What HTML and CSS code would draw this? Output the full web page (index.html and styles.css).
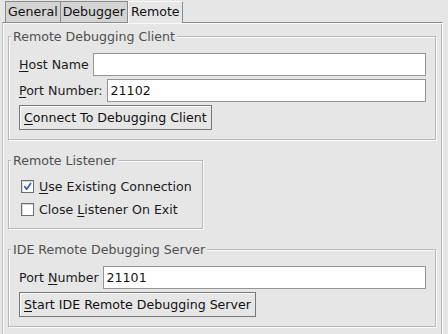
FILE: index.html
```html
<!DOCTYPE html>
<html>
<head>
<meta charset="utf-8">
<link rel="stylesheet" href="styles.css">
</head>
<body>
<div class="tabs">
  <div class="tab">General</div>
  <div class="tab">Debugger</div>
  <div class="tab active">Remote</div>
</div>
<div class="panel">
  <fieldset class="group">
    <legend>Remote Debugging Client</legend>
    <div class="body">
      <div class="row"><span class="label"><u>H</u>ost Name</span><div class="field"></div></div>
      <div class="row"><span class="label"><u>P</u>ort Number:</span><div class="field">21102</div></div>
      <div class="row"><button class="btn"><u>C</u>onnect To Debugging Client</button></div>
    </div>
  </fieldset>
  <fieldset class="group narrow">
    <legend>Remote Listener</legend>
    <div class="body checks">
      <div class="check"><span class="box"><svg width="11" height="11" viewBox="0 0 11 11"><path d="M2.6 5.6 L4.6 8.2 L8.6 2.4" fill="none" stroke="#2f5fbf" stroke-width="1.7" stroke-linecap="round" stroke-linejoin="round"/></svg></span><span><u>U</u>se Existing Connection</span></div>
      <div class="check"><span class="box"></span><span>Close <u>L</u>istener On Exit</span></div>
    </div>
  </fieldset>
  <fieldset class="group">
    <legend>IDE Remote Debugging Server</legend>
    <div class="body">
      <div class="row"><span class="label">Port <u>N</u>umber</span><div class="field">21101</div></div>
      <div class="row"><button class="btn"><u>S</u>tart IDE Remote Debugging Server</button></div>
    </div>
  </fieldset>
</div>
</body>
</html>
```

FILE: styles.css
```css
html, body {
  margin: 0;
  padding: 0;
}
body {
  background: #e6e6e6;
  font-family: "DejaVu Sans", sans-serif;
  font-size: 12.6px;
  color: #1c1c1c;
  width: 448px;
  height: 334px;
  overflow: hidden;
}
u {
  text-decoration: underline;
  text-underline-offset: 2px;
}
.tabs {
  display: flex;
  align-items: flex-end;
  height: 22px;
  padding-left: 5px;
  box-sizing: border-box;
}
.tab {
  height: 21px;
  box-sizing: border-box;
  line-height: 20px;
  padding: 0 2px;
  border: 1px solid #8a8a8a;
  border-bottom: none;
  background: #d4d4d4;
  color: #111;
}
.tab + .tab {
  border-left: none;
}
.tab.active {
  height: 22px;
  margin-bottom: -1px;
  position: relative;
  z-index: 1;
  background: #e6e6e6;
  border-left: 1px solid #fafafa;
  border-top-color: #fafafa;
  border-right-color: #8a8a8a;
}
.panel {
  margin-left: 2px;
  width: 441px;
  height: 312px;
  box-sizing: border-box;
  border-top: 1px solid #8a8a8a;
  border-left: 1px solid #c2c2c2;
  border-right: 1px solid #fafafa;
  box-shadow: inset 1px 1px 0 #fafafa, inset -1px 0 0 #b8b8b8;
  padding: 6px 6px 0 5px;
}
.group {
  margin: 0 0 13px 0;
  padding: 0;
  border: 1px solid #b8b8b8;
  box-shadow: inset 1px 1px 0 #fafafa, 1px 1px 0 #fafafa;
  min-inline-size: 0;
}
.group:last-child {
  margin-bottom: 0;
}
.group.narrow {
  width: fit-content;
}
legend {
  margin-left: 2px;
  padding: 0 2px;
  line-height: 15px;
  background: #e6e6e6;
  color: #505050;
}
.body {
  padding: 9px 9px 9px 10px;
  display: flex;
  flex-direction: column;
  gap: 3px;
}
.row {
  display: flex;
  align-items: center;
  gap: 4px;
}
.label {
  white-space: nowrap;
}
.field {
  flex: 1;
  height: 23px;
  box-sizing: border-box;
  background: #fff;
  border: 1px solid #959595;
  padding: 0 3px;
  line-height: 21px;
  color: #111;
}
.btn {
  font: inherit;
  color: #111;
  height: 25px;
  box-sizing: border-box;
  padding: 0 4px;
  background: #e6e6e6;
  border: 1px solid #777;
  box-shadow: inset 1px 1px 0 #fafafa;
  border-radius: 0;
  line-height: 23px;
}
.checks {
  gap: 0;
  padding: 7px 10px 7px 12px;
}
.check {
  display: flex;
  align-items: center;
  height: 23px;
  white-space: nowrap;
}
.box {
  width: 13px;
  height: 13px;
  box-sizing: border-box;
  border: 1px solid #6e6e6e;
  background: #fff;
  box-shadow: inset 1px 1px 0 #d8d8d8;
  margin-right: 5px;
  display: flex;
  align-items: center;
  justify-content: center;
}
```
